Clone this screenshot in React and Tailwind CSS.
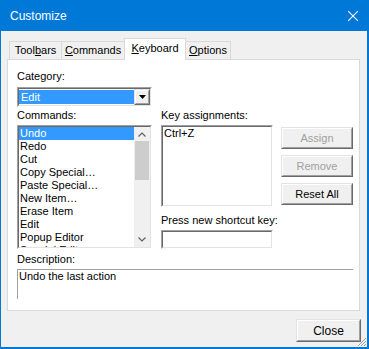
import React from 'react';

const sunkenOuter = 'border border-t-[#a0a0a0] border-l-[#a0a0a0] border-b-white border-r-white';
const sunkenInner = 'border border-t-[#696969] border-l-[#696969] border-b-[#e3e3e3] border-r-[#e3e3e3]';
const raisedOuter = 'border border-t-[#e3e3e3] border-l-[#e3e3e3] border-b-[#696969] border-r-[#696969]';
const raisedInner = 'border border-t-white border-l-white border-b-[#a0a0a0] border-r-[#a0a0a0]';

const Chevron = ({ up }) => (
  <svg width="8" height="5" viewBox="0 0 8 5">
    <path d={up ? 'M0.5 4.5 L4 1 L7.5 4.5' : 'M0.5 0.5 L4 4 L7.5 0.5'} fill="none" stroke="#606060" strokeWidth="1.2" />
  </svg>
);

const Button = ({ children, disabled, className = '' }) => (
  <div className={`${raisedOuter} bg-[#f0f0f0] ${className}`}>
    <div className={`${raisedInner} h-full flex items-center justify-center ${disabled ? 'text-[#a0a0a0]' : 'text-black'}`}>
      {children}
    </div>
  </div>
);

const Tab = ({ children, active, width }) => (
  <div
    className={`-ml-px first:ml-0 border-x border-t border-[#d9d9d9] flex justify-center ${
      active ? 'relative z-10 bg-white h-[22px] -mb-px pt-[3px]' : 'bg-[#f0f0f0] h-[18px] pt-[2px]'
    } ${width}`}
  >
    <span className="leading-[13px]">{children}</span>
  </div>
);

const commands = ['Undo', 'Redo', 'Cut', 'Copy Special…', 'Paste Special…', 'New Item…', 'Erase Item', 'Edit', 'Popup Editor', 'Special Edit'];

export default function App() {
  return (
    <div className="w-[369px] h-[349px] bg-[#0078d7] pl-px pr-[2px] pb-[2px] flex flex-col font-['Liberation_Sans',Arial,sans-serif] text-[11px] text-black">
      <div className="h-[31px] shrink-0 flex items-center justify-between pl-[9px] pr-[9px]">
        <span className="text-white text-[12px]">Customize</span>
        <svg width="10" height="10" viewBox="0 0 10 10">
          <path d="M0 0 L10 10 M10 0 L0 10" stroke="white" strokeWidth="1.1" />
        </svg>
      </div>

      <div className="flex-1 bg-[#f0f0f0] relative flex flex-col pt-[7px]">
        <div className="flex items-end pl-[8px]">
          <Tab width="w-[53px]">
            Tool<span className="underline">b</span>ars
          </Tab>
          <Tab width="w-[64px]">
            <span className="underline">C</span>ommands
          </Tab>
          <Tab width="w-[62px]" active>
            <span className="underline">K</span>eyboard
          </Tab>
          <Tab width="w-[46px]">
            <span className="underline">O</span>ptions
          </Tab>
        </div>

        <div className="ml-[6px] mr-[7px] h-[252px] border border-[#d9d9d9] bg-white pl-[9px] pt-[10px] flex flex-col">
          <div className="leading-[13px]">Category:</div>
          <div className={`${sunkenOuter} mt-[4px] w-[135px] h-[20px]`}>
            <div className={`${sunkenInner} h-full flex bg-white`}>
              <div className="flex-1 py-px">
                <div className="h-[14px] bg-[#3399ff] text-white pl-[2px] leading-[14px]">Edit</div>
              </div>
              <div className={`${raisedOuter} w-[16px] bg-[#f0f0f0]`}>
                <div className={`${raisedInner} h-full flex items-center justify-center`}>
                  <svg width="7" height="4" viewBox="0 0 7 4">
                    <path d="M0 0 H7 L3.5 4 Z" fill="black" />
                  </svg>
                </div>
              </div>
            </div>
          </div>

          <div className="flex mt-[2px]">
            <div className="w-[135px] flex flex-col">
              <div className="leading-[13px]">Commands:</div>
              <div className={`${sunkenOuter} mt-[3px] h-[124px]`}>
                <div className={`${sunkenInner} h-full flex bg-white`}>
                  <div className="flex-1 overflow-hidden">
                    {commands.map((c, i) => (
                      <div
                        key={c}
                        className={`h-[13px] leading-[13px] pl-[1px] whitespace-nowrap ${i === 0 ? 'bg-[#3399ff] text-white' : ''}`}
                      >
                        {c}
                      </div>
                    ))}
                  </div>
                  <div className="w-[16px] bg-[#f0f0f0] flex flex-col">
                    <div className="h-[14px] flex items-center justify-center">
                      <Chevron up />
                    </div>
                    <div className="h-[39px] mx-px bg-[#cdcdcd]" />
                    <div className="flex-1" />
                    <div className="h-[15px] flex items-center justify-center">
                      <Chevron />
                    </div>
                  </div>
                </div>
              </div>
            </div>

            <div className="w-[112px] ml-[9px] flex flex-col">
              <div className="leading-[13px]">Key assignments:</div>
              <div className={`${sunkenOuter} mt-[3px] h-[82px]`}>
                <div className={`${sunkenInner} h-full bg-white pl-px leading-[13px]`}>Ctrl+Z</div>
              </div>
              <div className="leading-[13px] mt-[7px] whitespace-nowrap">Press new shortcut key:</div>
              <div className={`${sunkenOuter} mt-[3px] h-[19px]`}>
                <div className={`${sunkenInner} h-full bg-white`} />
              </div>
            </div>

            <div className="w-[72px] ml-[8px] mt-[18px] flex flex-col gap-[6px]">
              <Button disabled className="h-[22px]">Assign</Button>
              <Button disabled className="h-[22px]">Remove</Button>
              <Button className="h-[22px]">Reset All</Button>
            </div>
          </div>

          <div className="leading-[13px] mt-[4px]">Description:</div>
          <div className="mt-[3px] w-[336px] h-[30px] border-t border-l border-[#a0a0a0] pl-px leading-[13px]">
            Undo the last action
          </div>
        </div>

        <Button className="self-end mr-[6px] mt-[8px] w-[65px] h-[23px] text-[12px]">Close</Button>

        <svg className="absolute right-0 bottom-0" width="10" height="10" viewBox="0 0 10 10">
          <path d="M9 1 L1 9 M9 4 L4 9 M9 7 L7 9" stroke="#a0a0a0" strokeWidth="1" />
        </svg>
      </div>
    </div>
  );
}
